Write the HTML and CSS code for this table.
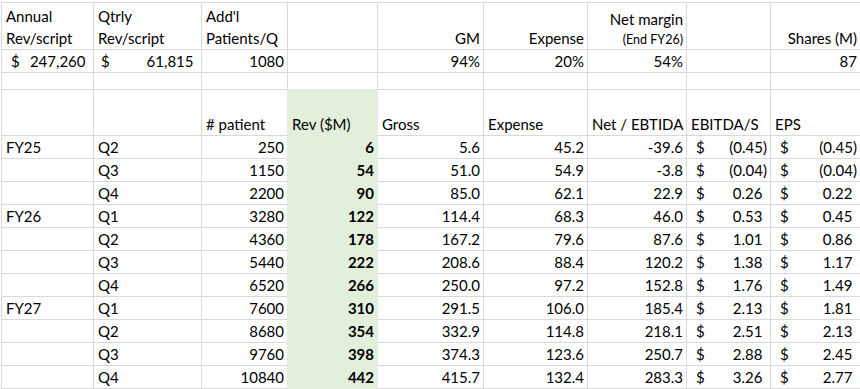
FILE: index.html
```
<!DOCTYPE html>
<html>
<head>
<meta charset="utf-8">
<title>Projection sheet</title>
<link rel="stylesheet" href="styles.css">
</head>
<body>
<div class="sheet">
  <!-- row 1 -->
  <div class="c w"><span>Annual</span><span>Rev/script</span></div>
  <div class="c w"><span>Qtrly</span><span>Rev/script</span></div>
  <div class="c w"><span>Add'l</span><span>Patients/Q</span></div>
  <div class="c"></div>
  <div class="c r">GM</div>
  <div class="c r">Expense</div>
  <div class="c w wr"><span>Net margin</span><span class="small">(End FY26)</span></div>
  <div class="c"></div>
  <div class="c r">Shares (M)</div>
  <!-- row 2 -->
  <div class="c acc pos accA"><span>$</span><span>247,260</span></div>
  <div class="c acc pos accB"><span>$</span><span>61,815</span></div>
  <div class="c r">1080</div>
  <div class="c"></div>
  <div class="c r">94%</div>
  <div class="c r">20%</div>
  <div class="c r">54%</div>
  <div class="c"></div>
  <div class="c r">87</div>
  <!-- row 3 -->
  <div class="c"></div><div class="c"></div><div class="c"></div><div class="c"></div><div class="c"></div><div class="c"></div><div class="c"></div><div class="c"></div><div class="c"></div>
  <!-- row 4 -->
  <div class="c"></div>
  <div class="c"></div>
  <div class="c">#&nbsp;patient</div>
  <div class="c g">Rev ($M)</div>
  <div class="c">Gross</div>
  <div class="c">Expense</div>
  <div class="c">Net / EBTIDA</div>
  <div class="c">EBITDA/S</div>
  <div class="c">EPS</div>
  <!-- data -->
  <div class="c">FY25</div><div class="c">Q2</div><div class="c r">250</div><div class="c r g b">6</div><div class="c r">5.6</div><div class="c r">45.2</div><div class="c r">-39.6</div><div class="c acc"><span>$</span><span>(0.45)</span></div><div class="c acc"><span>$</span><span>(0.45)</span></div>
  <div class="c"></div><div class="c">Q3</div><div class="c r">1150</div><div class="c r g b">54</div><div class="c r">51.0</div><div class="c r">54.9</div><div class="c r">-3.8</div><div class="c acc"><span>$</span><span>(0.04)</span></div><div class="c acc"><span>$</span><span>(0.04)</span></div>
  <div class="c"></div><div class="c">Q4</div><div class="c r">2200</div><div class="c r g b">90</div><div class="c r">85.0</div><div class="c r">62.1</div><div class="c r">22.9</div><div class="c acc pos"><span>$</span><span>0.26</span></div><div class="c acc pos"><span>$</span><span>0.22</span></div>
  <div class="c">FY26</div><div class="c">Q1</div><div class="c r">3280</div><div class="c r g b">122</div><div class="c r">114.4</div><div class="c r">68.3</div><div class="c r">46.0</div><div class="c acc pos"><span>$</span><span>0.53</span></div><div class="c acc pos"><span>$</span><span>0.45</span></div>
  <div class="c"></div><div class="c">Q2</div><div class="c r">4360</div><div class="c r g b">178</div><div class="c r">167.2</div><div class="c r">79.6</div><div class="c r">87.6</div><div class="c acc pos"><span>$</span><span>1.01</span></div><div class="c acc pos"><span>$</span><span>0.86</span></div>
  <div class="c"></div><div class="c">Q3</div><div class="c r">5440</div><div class="c r g b">222</div><div class="c r">208.6</div><div class="c r">88.4</div><div class="c r">120.2</div><div class="c acc pos"><span>$</span><span>1.38</span></div><div class="c acc pos"><span>$</span><span>1.17</span></div>
  <div class="c"></div><div class="c">Q4</div><div class="c r">6520</div><div class="c r g b">266</div><div class="c r">250.0</div><div class="c r">97.2</div><div class="c r">152.8</div><div class="c acc pos"><span>$</span><span>1.76</span></div><div class="c acc pos"><span>$</span><span>1.49</span></div>
  <div class="c">FY27</div><div class="c">Q1</div><div class="c r">7600</div><div class="c r g b">310</div><div class="c r">291.5</div><div class="c r">106.0</div><div class="c r">185.4</div><div class="c acc pos"><span>$</span><span>2.13</span></div><div class="c acc pos"><span>$</span><span>1.81</span></div>
  <div class="c"></div><div class="c">Q2</div><div class="c r">8680</div><div class="c r g b">354</div><div class="c r">332.9</div><div class="c r">114.8</div><div class="c r">218.1</div><div class="c acc pos"><span>$</span><span>2.51</span></div><div class="c acc pos"><span>$</span><span>2.13</span></div>
  <div class="c"></div><div class="c">Q3</div><div class="c r">9760</div><div class="c r g b">398</div><div class="c r">374.3</div><div class="c r">123.6</div><div class="c r">250.7</div><div class="c acc pos"><span>$</span><span>2.88</span></div><div class="c acc pos"><span>$</span><span>2.45</span></div>
  <div class="c"></div><div class="c">Q4</div><div class="c r">10840</div><div class="c r g b">442</div><div class="c r">415.7</div><div class="c r">132.4</div><div class="c r">283.3</div><div class="c acc pos"><span>$</span><span>3.26</span></div><div class="c acc pos"><span>$</span><span>2.77</span></div>
</div>
</body>
</html>
```

FILE: styles.css
```
* { box-sizing: border-box; }
html, body {
  margin: 0;
  padding: 0;
  background: #fff;
  overflow: hidden;
}
body {
  font-family: Lato, "Open Sans", sans-serif;
  font-size: 15px;
  color: #000;
}
.sheet {
  display: grid;
  grid-template-columns: 91px 107px 85px 89px 105px 103px 98px 83px 89px;
  grid-template-rows: 46px 22px 16px 45px repeat(11, 22px);
  gap: 1px;
  padding: 1px;
  margin: 2px 0 0 1px;
  background: #d9d9d9;
  width: max-content;
}
.c {
  background: #fff;
  display: flex;
  align-items: flex-end;
  padding: 0 3px 0 4px;
  line-height: 22px;
  white-space: nowrap;
}
.r { justify-content: flex-end; }
.g {
  background: #e2efda;
  box-shadow: 0 0 0 1px #e2efda;
}
.b { font-weight: 700; }
.acc {
  justify-content: space-between;
  padding-left: 9px;
}
.pos { padding-right: 7.5px; }
.accB { padding-left: 7px; }
.w {
  flex-direction: column;
  align-items: flex-start;
  justify-content: flex-end;
}
.w span { display: block; }
.wr { align-items: flex-end; }
.w .small {
  font-size: 12.5px;
  line-height: 19.5px;
}
```
